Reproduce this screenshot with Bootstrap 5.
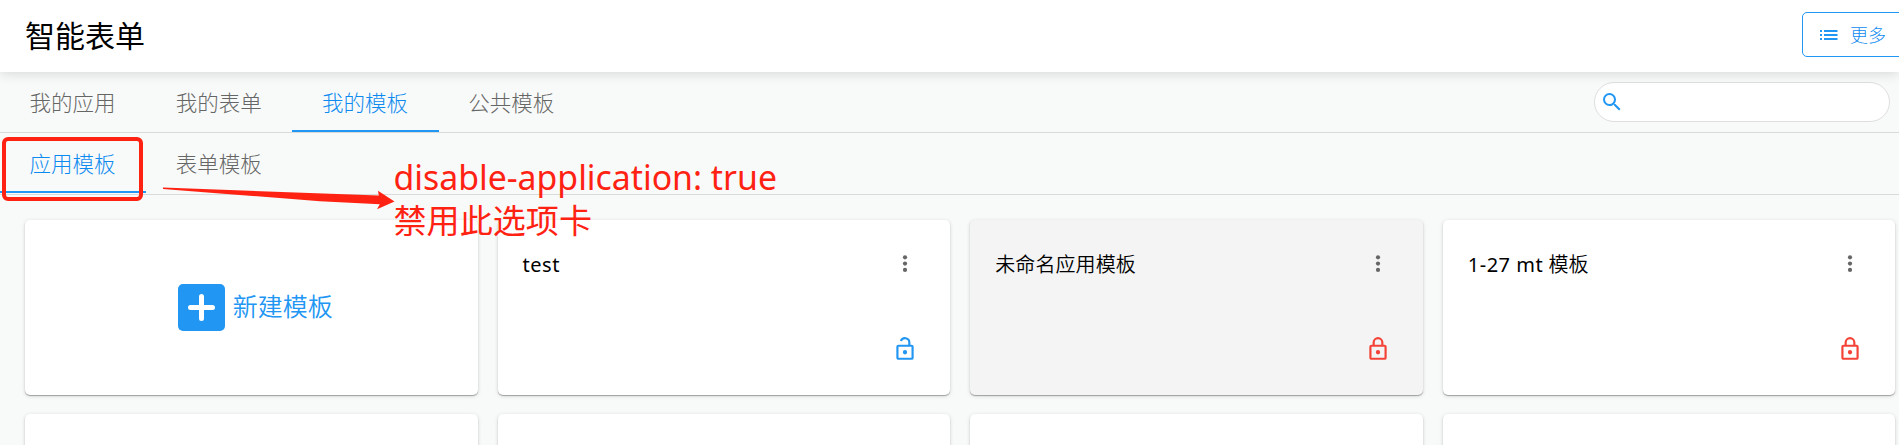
<!DOCTYPE html>
<html lang="zh-CN">
<head>
<meta charset="utf-8">
<title>智能表单</title>
<link href="https://cdn.jsdelivr.net/npm/bootstrap@5.3.0/dist/css/bootstrap.min.css" rel="stylesheet">
<style>
html,body{height:100%;overflow:hidden}
body{background:#f8faf9;color:#000;font-family:"Noto Sans","Noto Sans CJK SC",sans-serif;position:relative}
.app-header{height:72px;padding-left:25px;box-shadow:0 1px 12px rgba(0,0,0,.15);position:relative;z-index:1}
.app-title{font-size:30px;line-height:40px;margin-top:-1px}
.btn-more{height:45px;width:112px;margin:-3px -15px 0 0;padding:0 0 0 14px;border:1px solid #2196f3;color:#0d8af0;font-size:18px;font-weight:300;border-radius:5px;line-height:1;gap:9px}
.tab-strip{height:61px;border-bottom:1px solid #d9dbda;font-size:21.5px;font-weight:300}
.tab-strip.second{height:62px}
.tab-strip .nav-link{width:146.2px;height:60px;padding:0 1px 1px 0;line-height:61px;text-align:center;color:#666;border-bottom:2px solid transparent;border-radius:0}
.tab-strip .nav-link.active{color:#0d8af0;border-color:#2196f3}
.search-box{width:296px;height:40px;border:1px solid #dedede;border-radius:20px;margin-right:9px;padding-left:5px}
.search-box input{outline:0;min-width:0}
.tiles{display:grid;grid-template-columns:repeat(4,452.6px);grid-template-rows:175px 175px;gap:19.5px 20px;padding:24.5px 0 0 25px}
.tile{height:175px;border:0;border-radius:5px;box-shadow:0 1px 1px rgba(0,0,0,.3),0 1px 4px rgba(0,0,0,.14);padding:32.5px 32px 33px 25px}
.tile.locked{background:#f4f4f4}
.tile-name{font-size:20px;line-height:26px;letter-spacing:.1px;font-weight:350}
.latin{font-weight:400;letter-spacing:.5px}
.new-text{font-size:25px;color:#2196f3;font-weight:350}
.note-box{left:1.500px;top:137px;width:141.500px;height:64px;border:4px solid #ff2213;border-radius:6px;z-index:3}
.note-arrow{left:160px;top:185px;z-index:3}
.note-text{left:393.5px;top:156px;color:#ff2213;font-size:33.1px;line-height:43px;z-index:3;white-space:nowrap}
.note-en{font-size:33.8px;display:block}
svg{display:block;flex:none}
</style>
</head>
<body class="d-flex flex-column">
<header class="app-header flex-shrink-0 bg-white d-flex align-items-center justify-content-between">
  <div class="app-title">智能表单</div>
  <button class="btn btn-more d-flex align-items-center">
    <svg width="24" height="24" viewBox="0 0 24 24" fill="#2196f3"><path d="M3 7h2v2H3zM3 11h2v2H3zM3 15h2v2H3zM7 7h13.5v2H7zM7 11h13.5v2H7zM7 15h13.5v2H7z"/></svg>
    <span>更多</span>
  </button>
</header>
<nav class="tab-strip flex-shrink-0 d-flex justify-content-between align-items-start">
  <div class="nav flex-nowrap">
    <a class="nav-link">我的应用</a><a class="nav-link">我的表单</a><a class="nav-link active">我的模板</a><a class="nav-link">公共模板</a>
  </div>
  <div class="search-box bg-white d-flex align-items-center align-self-center">
    <svg width="24" height="24" viewBox="0 0 24 24" fill="#2196f3"><path d="M15.5 14h-.79l-.28-.27A6.47 6.47 0 0 0 16 9.5 6.5 6.5 0 1 0 9.5 16c1.61 0 3.09-.59 4.23-1.57l.27.28v.79l5 4.99L20.49 19l-4.99-5zm-6 0C7.01 14 5 11.99 5 9.5S7.01 5 9.5 5 14 7.01 14 9.5 11.99 14 9.5 14z"/></svg>
    <input class="border-0 bg-transparent flex-fill me-3" type="text">
  </div>
</nav>
<nav class="tab-strip second flex-shrink-0 nav flex-nowrap">
  <a class="nav-link active">应用模板</a><a class="nav-link">表单模板</a>
</nav>
<main class="tiles flex-fill overflow-hidden">
  <div class="card tile flex-row align-items-center justify-content-center p-0 ps-2">
    <svg width="47" height="47" viewBox="0 0 47 47"><rect width="47" height="47" rx="5" fill="#2196f3"/><path d="M23.5 12.5v22M12.5 23.5h22" stroke="#fff" stroke-width="5" stroke-linecap="round"/></svg>
    <span class="new-text ps-2">新建模板</span>
  </div>
  <div class="card tile justify-content-between">
    <div class="d-flex justify-content-between"><span class="tile-name"><span class="latin">test</span></span>
      <svg width="26" height="24" viewBox="0 0 26 24" fill="#666"><circle cx="13" cy="5.300" r="2.1"/><circle cx="13" cy="11.6" r="2.1"/><circle cx="13" cy="17.9" r="2.1"/></svg></div>
    <svg class="align-self-end" width="26" height="26" viewBox="0 0 24 24" fill="#2196f3"><path d="M18 8h-1V6a5 5 0 0 0-9.7-1.7l1.9.6A3 3 0 0 1 15 6v2H6a2 2 0 0 0-2 2v10c0 1.100.9 2 2 2h12a2 2 0 0 0 2-2V10a2 2 0 0 0-2-2zm0 12H6V10h12zm-6-3a2 2 0 1 0 0-4 2 2 0 0 0 0 4z"/></svg>
  </div>
  <div class="card tile locked justify-content-between">
    <div class="d-flex justify-content-between"><span class="tile-name">未命名应用模板</span>
      <svg width="26" height="24" viewBox="0 0 26 24" fill="#666"><circle cx="13" cy="5.300" r="2.1"/><circle cx="13" cy="11.6" r="2.1"/><circle cx="13" cy="17.9" r="2.1"/></svg></div>
    <svg class="align-self-end" width="26" height="26" viewBox="0 0 24 24" fill="#f44336"><path d="M18 8h-1V6A5 5 0 0 0 7 6v2H6a2 2 0 0 0-2 2v10c0 1.100.9 2 2 2h12a2 2 0 0 0 2-2V10a2 2 0 0 0-2-2zM9 6a3 3 0 0 1 6 0v2H9zm9 14H6V10h12zm-6-3a2 2 0 1 0 0-4 2 2 0 0 0 0 4z"/></svg>
  </div>
  <div class="card tile justify-content-between">
    <div class="d-flex justify-content-between"><span class="tile-name"><span class="latin">1-27 mt</span> 模板</span>
      <svg width="26" height="24" viewBox="0 0 26 24" fill="#666"><circle cx="13" cy="5.300" r="2.1"/><circle cx="13" cy="11.6" r="2.1"/><circle cx="13" cy="17.9" r="2.1"/></svg></div>
    <svg class="align-self-end" width="26" height="26" viewBox="0 0 24 24" fill="#f44336"><path d="M18 8h-1V6A5 5 0 0 0 7 6v2H6a2 2 0 0 0-2 2v10c0 1.100.9 2 2 2h12a2 2 0 0 0 2-2V10a2 2 0 0 0-2-2zM9 6a3 3 0 0 1 6 0v2H9zm9 14H6V10h12zm-6-3a2 2 0 1 0 0-4 2 2 0 0 0 0 4z"/></svg>
  </div>
  <div class="card tile"></div><div class="card tile"></div><div class="card tile"></div><div class="card tile"></div>
</main>
<!-- Annotation over the page -->
<div class="note-box position-absolute"></div>
<svg class="note-arrow position-absolute" width="240" height="30" viewBox="160 185 240 30" fill="#ff2213"><path d="M163 187.600 L378.800 195.500 L378 190.700 L394.500 201.500 L377 209.300 L379.800 204.300 L320 201.300 Q240 195 163 188.900Z"/></svg>
<div class="note-text position-absolute"><span class="note-en">disable-application: true</span>禁用此选项卡</div>
<script src="https://cdn.jsdelivr.net/npm/bootstrap@5.3.0/dist/js/bootstrap.bundle.min.js"></script>
</body>
</html>
